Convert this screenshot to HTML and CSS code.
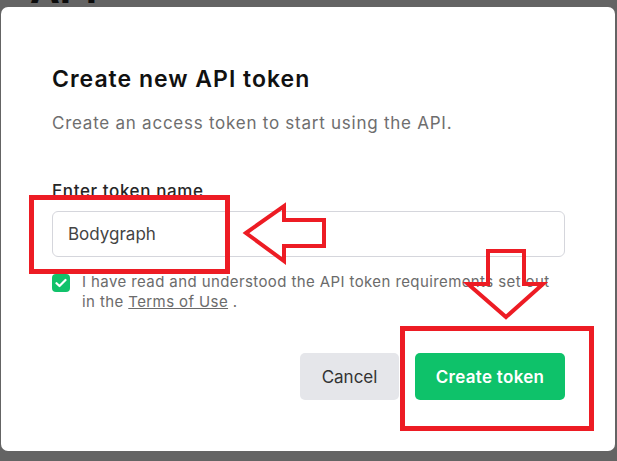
FILE: index.html
```html
<!DOCTYPE html>
<html lang="en">
<head>
    <meta charset="UTF-8">
    <meta name="viewport" content="width=device-width, initial-scale=1.0">
    <title>Create new API token</title>
    <link rel="stylesheet" href="styles.css">
</head>
<body>
    <h1 class="page-title">API</h1>

    <div class="modal">
        <h2 class="modal-title">Create new API token</h2>
        <p class="modal-sub">Create an access token to start using the API.</p>

        <label class="field-label" for="tokenName">Enter token name</label>
        <input class="field-input" type="text" id="tokenName" value="Bodygraph">

        <div class="agree">
            <span class="check">
                <svg width="12" height="10" viewBox="0 0 12 10"><path d="M1.5 5.2 4.5 8 10.5 2" fill="none" stroke="#fff" stroke-width="2.2" stroke-linecap="round" stroke-linejoin="round"/></svg>
            </span>
            <p>I have read and understood the API token requirements set out in the <a href="#">Terms of Use</a> .</p>
        </div>

        <div class="actions">
            <button class="btn btn-cancel">Cancel</button>
            <button class="btn btn-create">Create token</button>
        </div>
    </div>

    <!-- red annotation marks drawn on top of the screenshot -->
    <svg class="marks" viewBox="0 0 617 461" width="617" height="461">
        <g fill="none" stroke="#ed1c24">
            <rect x="31.5" y="197.5" width="196" height="74" stroke-width="5"/>
            <polygon points="246,233 284,206 284,220 324,220 324,246 284,246 284,261" stroke-width="4"/>
            <polygon points="488,251 524,251 524,284 543,284 506,317 468,284 488,284" stroke-width="4"/>
            <rect x="402.5" y="328.5" width="189" height="100" stroke-width="5"/>
        </g>
    </svg>
</body>
</html>
```

FILE: styles.css
```css
* {
    box-sizing: border-box;
    margin: 0;
    padding: 0;
}

body {
    font-family: Inter, "Noto Sans", sans-serif;
    background-color: #646464;
    width: 617px;
    height: 461px;
    overflow: hidden;
    position: relative;
}

.page-title {
    position: absolute;
    left: 30px;
    top: -36px;
    font-size: 40px;
    font-weight: 700;
    color: #0b0b0b;
}

.modal {
    position: relative;
    margin: 7px 2px 0 1px;
    height: 444px;
    background-color: #fff;
    border-radius: 7px;
    padding: 57px 50px 0 51px;
}

.modal-title {
    font-size: 23px;
    line-height: 30px;
    font-weight: 600;
    letter-spacing: 1px;
    color: #111;
}

.modal-sub {
    margin-top: 17px;
    font-size: 17px;
    line-height: 24px;
    letter-spacing: 0.75px;
    color: #6e6e6e;
}

.field-label {
    display: block;
    margin-top: 44px;
    font-size: 17px;
    line-height: 24px;
    font-weight: 500;
    letter-spacing: 0.6px;
    color: #262626;
}

.field-input {
    display: block;
    width: 100%;
    height: 46px;
    margin-top: 8px;
    padding: 0 15px;
    border: 1px solid #d5d6dc;
    border-radius: 6px;
    font-family: inherit;
    font-size: 17px;
    color: #444;
    outline: none;
}

.agree {
    display: flex;
    gap: 12px;
    margin-top: 17px;
}

.check {
    flex: none;
    width: 18px;
    height: 18px;
    border-radius: 4px;
    background-color: #11c26b;
    display: flex;
    align-items: center;
    justify-content: center;
}

.agree p {
    margin-top: -2px;
    font-size: 15px;
    line-height: 20px;
    color: #6b6b6b;
    letter-spacing: 0.4px;
}

.agree a {
    color: #6b6b6b;
    text-decoration: underline;
}

.actions {
    display: flex;
    justify-content: flex-end;
    gap: 16px;
    margin-top: 41px;
}

.btn {
    height: 47px;
    border: none;
    border-radius: 5px;
    font-family: inherit;
    font-size: 17px;
}

.btn-cancel {
    width: 99px;
    background-color: #e5e6ea;
    color: #333;
}

.btn-create {
    width: 150px;
    background-color: #0ec26a;
    color: #fff;
    font-weight: 600;
    letter-spacing: 0.3px;
}

.marks {
    position: absolute;
    left: 0;
    top: 0;
}
```
